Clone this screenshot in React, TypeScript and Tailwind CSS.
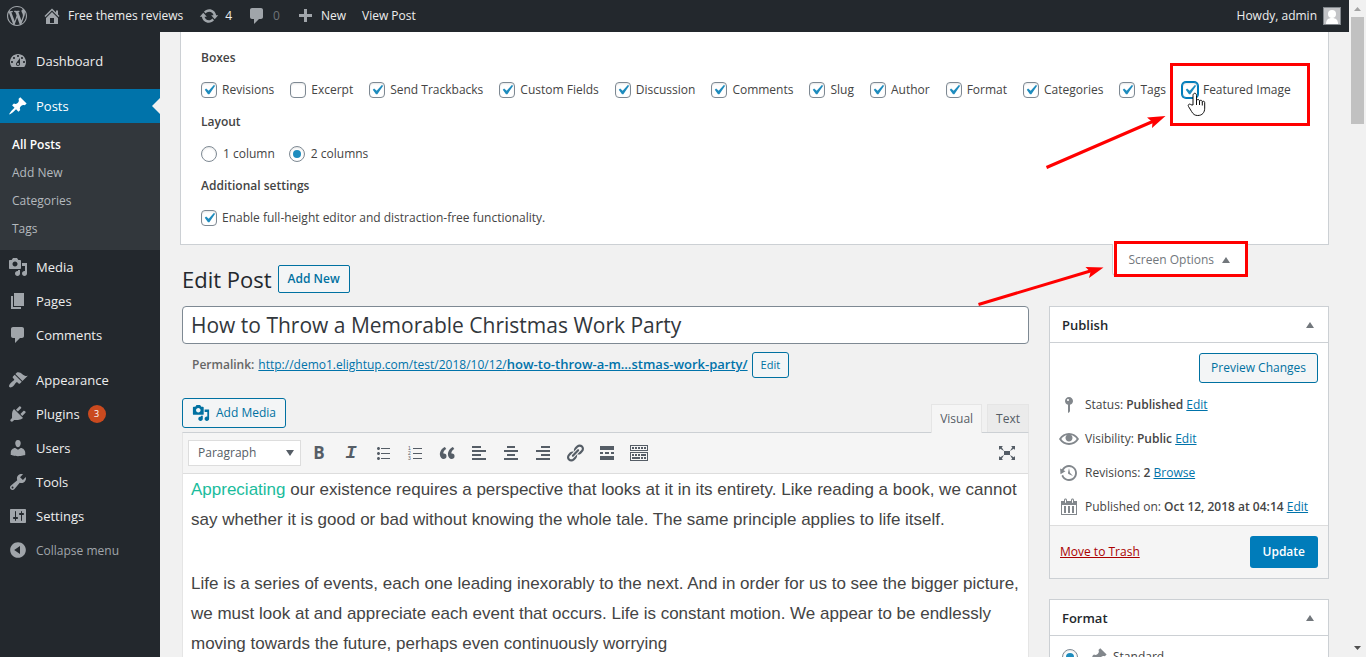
import { useState, type ReactNode } from 'react'
import clsx from 'clsx'

const ICONS = {
  wordpress:
    'M20 10c0-5.51-4.49-10-10-10C4.48 0 0 4.49 0 10c0 5.52 4.48 10 10 10 5.51 0 10-4.48 10-10zM7.78 15.37L4.37 6.22c.55-.02 1.17-.08 1.17-.08.5-.06.44-1.13-.06-1.11 0 0-1.45.11-2.37.11-.18 0-.37 0-.58-.01C4.12 2.69 6.87 1.11 10 1.11c2.33 0 4.45.87 6.05 2.34-.68-.11-1.65.39-1.65 1.58 0 .74.45 1.36.9 2.1.35.61.55 1.36.55 2.46 0 1.49-1.4 5-1.4 5l-3.03-8.37c.54-.02.82-.17.82-.17.5-.05.44-1.25-.06-1.22 0 0-1.44.12-2.38.12-.87 0-2.33-.12-2.33-.12-.5-.03-.56 1.2-.06 1.22l.92.08 1.26 3.41zM17.41 10c.24-.64.74-1.87.43-4.25.7 1.29 1.05 2.71 1.05 4.25 0 3.29-1.73 6.24-4.4 7.78.97-2.59 1.94-5.2 2.92-7.78zM6.1 18.09C3.12 16.65 1.11 13.53 1.11 10c0-1.3.23-2.48.72-3.59C3.25 10.3 4.67 14.2 6.1 18.09zm4.03-6.63l2.58 6.98c-.86.29-1.76.45-2.71.45-.79 0-1.57-.11-2.29-.33.81-2.38 1.62-4.74 2.42-7.1z',
  home: 'M16 8.5l1.53 1.53-1.06 1.06L10 4.6l-6.47 6.49-1.06-1.06L10 2.5l4 4v-2h2v4zm-6-2.46l6 5.99V18H4v-5.97zM12 17v-5H8v5h4z',
  dashboard:
    'M3.76 16h12.48c1.1-1.37 1.76-3.11 1.76-5 0-4.42-3.58-8-8-8s-8 3.58-8 8c0 1.89.66 3.63 1.76 5zM10 4c.55 0 1 .45 1 1s-.45 1-1 1-1-.45-1-1 .45-1 1-1zM6 6c.55 0 1 .45 1 1s-.45 1-1 1-1-.45-1-1 .45-1 1-1zm8 0c.55 0 1 .45 1 1s-.45 1-1 1-1-.45-1-1 .45-1 1-1zm-5.37 5.55L12 7v6c0 1.1-.9 2-2 2s-2-.9-2-2c0-.57.24-1.08.63-1.45zM4 10c.55 0 1 .45 1 1s-.45 1-1 1-1-.45-1-1 .45-1 1-1zm12 0c.55 0 1 .45 1 1s-.45 1-1 1-1-.45-1-1 .45-1 1-1zm-5 3c0-.55-.45-1-1-1s-1 .45-1 1 .45 1 1 1 1-.45 1-1z',
  update:
    'M10.2 3.28c3.53 0 6.43 2.61 6.92 6h2.08l-3.5 4-3.5-4h2.32c-.45-1.97-2.21-3.45-4.32-3.45-1.45 0-2.73.71-3.54 1.78L4.95 5.66C6.23 4.2 8.11 3.28 10.2 3.28zm-.4 13.44c-3.52 0-6.43-2.61-6.92-6H.8l3.5-4c1.17 1.33 2.33 2.67 3.5 4H5.48c.45 1.97 2.21 3.45 4.32 3.45 1.45 0 2.73-.71 3.54-1.78l1.71 1.95c-1.28 1.46-3.15 2.38-5.25 2.38z',
  comments: 'M5 2h9c1.1 0 2 .9 2 2v7c0 1.1-.9 2-2 2h-2l-5 5v-5H5c-1.1 0-2-.9-2-2V4c0-1.1.9-2 2-2z',
  plus: 'M17 8v3h-5v5H9v-5H4V8h5V3h3v5h5z',
  post: 'M10.44 3.02l1.82-1.82 6.36 6.35-1.83 1.82c-1.05-.68-2.48-.57-3.41.36l-.75.75c-.92.93-1.04 2.35-.35 3.41l-1.83 1.82-2.41-2.41-2.8 2.79c-.42.42-3.38 2.71-3.8 2.29s1.86-3.39 2.28-3.81l2.79-2.79L4.1 9.36l1.83-1.82c1.05.69 2.48.57 3.4-.36l.75-.75c.93-.92 1.05-2.35.36-3.41z',
  media:
    'M13 11V4c0-.55-.45-1-1-1h-1.67L9 1H5L3.67 3H2c-.55 0-1 .45-1 1v7c0 .55.45 1 1 1h10c.55 0 1-.45 1-1zM7 4.5c1.38 0 2.5 1.12 2.5 2.5S8.38 9.5 7 9.5 4.5 8.38 4.5 7 5.62 4.5 7 4.5zM14 6h5v10.5c0 1.38-1.12 2.5-2.5 2.5S14 17.88 14 16.5s1.12-2.5 2.5-2.5c.17 0 .34.02.5.05V9h-3V6zm-4 8.05V13h2v3.5c0 1.38-1.12 2.5-2.5 2.5S7 17.88 7 16.5 8.12 14 9.5 14c.17 0 .34.02.5.05z',
  page: 'M6 15V2h10v13H6zm-1 1h8v2H3V5h2v11z',
  appearance:
    'M14.48 11.06L7.41 3.99l1.5-1.5c.5-.56 2.3-.47 3.51.32 1.21.8 1.43 1.28 2.91 2.1 1.18.64 2.45 1.26 4.45.85zm-.71.71L6.7 4.7 4.93 6.47c-.39.39-.39 1.02 0 1.41l1.06 1.06c.39.39.39 1.03 0 1.42-.6.6-1.43 1.11-2.21 1.69-.35.26-.7.53-1.01.84C1.43 14.23.4 16.08 1.4 17.07c.99 1 2.84-.03 4.18-1.36.31-.31.58-.66.85-1.02.57-.78 1.08-1.61 1.69-2.21.39-.39 1.02-.39 1.41 0l1.06 1.06c.39.39 1.02.39 1.41 0z',
  plugins:
    'M13.11 4.36L9.87 7.6 8 5.73l3.24-3.24c.35-.34 1.05-.2 1.56.32.52.51.66 1.21.31 1.55zm-8 1.77l.91-1.12 9.01 9.01-1.19.84c-.71.71-2.63 1.16-3.82 1.16H6.14L4.9 17.26c-.59.59-1.54.59-2.12 0-.59-.58-.59-1.53 0-2.12l1.24-1.24v-3.88c0-1.13.4-3.19 1.09-3.89zm7.26 3.97l3.24-3.24c.34-.35 1.04-.21 1.55.31.52.51.66 1.21.31 1.55l-3.24 3.25z',
  users:
    'M10 9.25c-2.27 0-2.73-3.44-2.73-3.44C7 4.02 7.82 2 9.97 2c2.16 0 2.98 2.02 2.71 3.81 0 0-.41 3.44-2.68 3.44zm0 2.57L12.72 10c2.39 0 4.52 2.33 4.52 4.53v2.49s-3.65 1.13-7.24 1.13c-3.65 0-7.24-1.13-7.24-1.13v-2.49c0-2.25 1.94-4.48 4.47-4.48z',
  tools:
    'M16.68 9.77c-1.34 1.34-3.3 1.67-4.95.99l-5.41 6.52c-.99.99-2.59.99-3.58 0s-.99-2.59 0-3.57l6.52-5.42c-.68-1.65-.35-3.61.99-4.95 1.28-1.28 3.12-1.62 4.72-1.06l-2.89 2.89 2.82 2.82 2.86-2.87c.53 1.58.18 3.39-1.08 4.65zM3.81 16.21c.4.39 1.04.39 1.43 0 .4-.4.4-1.04 0-1.43-.39-.4-1.03-.4-1.43 0-.39.39-.39 1.03 0 1.43z',
  settings:
    'M18 16V4c0-.55-.45-1-1-1H3c-.55 0-1 .45-1 1v12c0 .55.45 1 1 1h14c.55 0 1-.45 1-1zM8 11h1c.55 0 1 .45 1 1s-.45 1-1 1H8v1.5c0 .28-.22.5-.5.5s-.5-.22-.5-.5V13H6c-.55 0-1-.45-1-1s.45-1 1-1h1V5.5c0-.28.22-.5.5-.5s.5.22.5.5V11zm5-2h-1c-.55 0-1-.45-1-1s.45-1 1-1h1V5.5c0-.28.22-.5.5-.5s.5.22.5.5V7h1c.55 0 1 .45 1 1s-.45 1-1 1h-1v5.5c0 .28-.22.5-.5.5s-.5-.22-.5-.5V9z',
  collapse:
    'M10 2.16c4.33 0 7.84 3.51 7.84 7.84s-3.51 7.84-7.84 7.84S2.16 14.33 2.16 10 5.71 2.16 10 2.16zm2 11.72V6.12L6.18 9.97z',
  visibility:
    'M19.7 9.4C17.7 6 14 3.9 10 3.9S2.3 6 .3 9.4L0 10l.3.6c2 3.4 5.7 5.5 9.7 5.5s7.7-2.1 9.7-5.5l.3-.6-.3-.6zM10 14.1c-3.1 0-6-1.6-7.7-4.1C3.6 8 5.7 6.6 8 6.1c-.9.6-1.5 1.7-1.5 2.9 0 1.9 1.6 3.5 3.5 3.5s3.5-1.6 3.5-3.5c0-1.2-.6-2.3-1.5-2.9 2.3.5 4.4 1.9 5.7 3.9-1.7 2.5-4.6 4.1-7.7 4.1z',
  backup:
    'M13.65 2.88c3.93 2.01 5.48 6.84 3.47 10.77s-6.83 5.48-10.77 3.47c-1.87-.96-3.2-2.56-3.86-4.4l1.64-1.03c.45 1.57 1.52 2.95 3.08 3.76 3.01 1.54 6.69.35 8.23-2.66 1.55-3.01.36-6.69-2.65-8.24C9.78 3.01 6.1 4.2 4.56 7.21l1.88.97-4.95 3.08-.39-5.82 1.78.91C4.9 2.4 9.75.89 13.65 2.88zm-4.36 7.83C9.11 10.53 9 10.28 9 10c0-.07.03-.12.04-.19h-.01L10 5l.97 4.81L14 13l-4.5-2.12.02-.02c-.08-.04-.16-.09-.23-.15z',
  calendar:
    'M15 4h3v14H2V4h3V3c0-.83.67-1.5 1.5-1.5S8 2.17 8 3v1h4V3c0-.83.67-1.5 1.5-1.5S15 2.17 15 3v1zM6 3v2.5c0 .28.22.5.5.5s.5-.22.5-.5V3c0-.28-.22-.5-.5-.5S6 2.72 6 3zm7 0v2.5c0 .28.22.5.5.5s.5-.22.5-.5V3c0-.28-.22-.5-.5-.5s-.5.22-.5.5zm4 14V8H3v9h14zM7 16V9H5v7h2zm4 0V9H9v7h2zm4 0V9h-2v7h2z',
  status:
    'M14 6c0 1.86-1.28 3.41-3 3.86V16c0 1-2 2-2 2V9.86c-1.72-.45-3-2-3-3.86 0-2.21 1.79-4 4-4s4 1.79 4 4zM8 5c0 .55.45 1 1 1s1-.45 1-1-.45-1-1-1-1 .45-1 1z',
  ul: 'M5.5 7C4.67 7 4 6.33 4 5.5 4 4.68 4.67 4 5.5 4 6.32 4 7 4.68 7 5.5 7 6.33 6.32 7 5.5 7zM8 5h9v1H8V5zm-2.5 7c-.83 0-1.5-.67-1.5-1.5C4 9.68 4.67 9 5.5 9c.82 0 1.5.68 1.5 1.5 0 .83-.68 1.5-1.5 1.5zM8 10h9v1H8v-1zm-2.5 7c-.83 0-1.5-.67-1.5-1.5 0-.82.67-1.5 1.5-1.5.82 0 1.5.68 1.5 1.5 0 .83-.68 1.5-1.5 1.5zM8 15h9v1H8v-1z',
  olLines: 'M8 5h9v1H8V5zm0 5h9v1H8v-1zm0 5h9v1H8v-1z',
  quote:
    'M9.49 13.22c0-.74-.2-1.38-.61-1.9-.62-.78-1.83-.88-2.53-.72-.29-1.65 1.11-3.75 2.92-4.65L7.88 4c-2.73 1.3-5.42 4.28-4.96 8.05C3.21 14.43 4.59 16 6.54 16c.85 0 1.56-.25 2.12-.75s.83-1.18.83-2.03zm8.05 0c0-.74-.2-1.38-.61-1.9-.63-.78-1.83-.88-2.53-.72-.29-1.65 1.11-3.75 2.92-4.65L15.93 4c-2.73 1.3-5.41 4.28-4.95 8.05.29 2.38 1.66 3.95 3.61 3.95.85 0 1.56-.25 2.12-.75s.83-1.18.83-2.03z',
  alignLeft: 'M12 5V3H3v2h9zm5 4V7H3v2h14zm-5 4v-2H3v2h9zm5 4v-2H3v2h14z',
  alignCenter: 'M14 5V3H6v2h8zm3 4V7H3v2h14zm-3 4v-2H6v2h8zm3 4v-2H3v2h14z',
  alignRight: 'M17 5V3H8v2h9zm0 4V7H3v2h14zm0 4v-2H8v2h9zm0 4v-2H3v2h14z',
  link: 'M17.74 2.76c1.68 1.69 1.68 4.41 0 6.1l-1.53 1.52c-1.12 1.12-2.7 1.47-4.14 1.09l2.62-2.61.76-.77.76-.76c.84-.84.84-2.2 0-3.04-.84-.85-2.2-.85-3.04 0l-.77.76-3.38 3.38c-.37-1.44-.02-3.02 1.1-4.14l1.52-1.53c1.69-1.68 4.42-1.68 6.1 0zM8.59 13.43l5.34-5.34c.42-.42.42-1.1 0-1.52-.44-.43-1.13-.39-1.53 0l-5.33 5.34c-.42.42-.42 1.1 0 1.52.44.43 1.13.39 1.52 0zm-.76 2.29l4.14-4.15c.38 1.44.03 3.02-1.09 4.14l-1.52 1.53c-1.69 1.68-4.41 1.68-6.1 0-1.68-1.68-1.68-4.42 0-6.1l1.53-1.52c1.12-1.12 2.7-1.47 4.14-1.1l-4.14 4.15c-.85.84-.85 2.2 0 3.05.84.84 2.2.84 3.04 0z',
  more: 'M17 7V3H3v4h14zM6 11V9H3v2h3zm6 0V9H8v2h4zm5 0V9h-3v2h3zm0 6v-4H3v4h14z',
  kitchenSink:
    'M19 2v6H1V2h18zm-1 5V3H2v4h16zM5 4v2H3V4h2zm3 0v2H6V4h2zm3 0v2H9V4h2zm3 0v2h-2V4h2zm3 0v2h-2V4h2zm2 5v9H1V9h18zm-1 8v-7H2v7h16zM5 11v2H3v-2h2zm3 0v2H6v-2h2zm3 0v2H9v-2h2zm6 0v2h-5v-2h5zm-6 3v2H3v-2h8zm3 0v2h-2v-2h2zm3 0v2h-2v-2h2z',
  expand:
    'M7 8h6v4H7zm-5 5v4h4l-1.2-1.2L7 12l-3.8 2.2M14 17h4v-4l-1.2 1.2L13 12l2.2 3.8M14 3l1.3 1.3L13 8l3.8-2.2L18 7V3M6 3H2v4l1.2-1.2L7 8 4.7 4.3',
  check: 'M14.83 4.89l1.34.94-5.81 8.38H9.02L5.78 9.67l1.34-1.25 2.57 2.4z',
}

type IconName = keyof typeof ICONS

function Icon({ name, className = 'size-5' }: { name: IconName; className?: string }) {
  return (
    <svg className={clsx('shrink-0', className)} viewBox="0 0 20 20" fill="currentColor" aria-hidden="true">
      <path d={ICONS[name]} />
    </svg>
  )
}

function Triangle({ down = false, className = 'h-[6px] w-2' }: { down?: boolean; className?: string }) {
  return (
    <svg
      className={clsx('shrink-0', className)}
      viewBox="0 0 8 6"
      preserveAspectRatio="none"
      fill="currentColor"
      aria-hidden="true"
    >
      <path d={down ? 'M0 0h8L4 6z' : 'M0 6h8L4 0z'} />
    </svg>
  )
}

function Checkbox({ label, checked = false, focused = false }: { label: string; checked?: boolean; focused?: boolean }) {
  const [on, setOn] = useState(checked)
  return (
    <label className="flex items-center gap-[5px] whitespace-nowrap">
      <span className="grid grid-cols-[16px] grid-rows-[16px] place-items-center">
        <input
          type="checkbox"
          checked={on}
          onChange={() => setOn(!on)}
          className={clsx(
            'col-start-1 row-start-1 size-4 appearance-none rounded border bg-white shadow-[inset_0_1px_2px_rgba(0,0,0,0.1)]',
            focused ? 'border-[#007cba] ring-1 ring-[#007cba]' : 'border-[#7e8993]',
          )}
        />
        {on && <Icon name="check" className="pointer-events-none col-start-1 row-start-1 size-5 text-[#1e8cbe]" />}
      </span>
      {label}
    </label>
  )
}

function Radio({ label, name, checked = false }: { label: ReactNode; name: string; checked?: boolean }) {
  return (
    <label className="flex items-center gap-[6px] whitespace-nowrap">
      <span className="grid grid-cols-[16px] grid-rows-[16px] place-items-center">
        <input
          type="radio"
          name={name}
          defaultChecked={checked}
          className="peer col-start-1 row-start-1 size-4 appearance-none rounded-full border border-[#7e8993] bg-white shadow-[inset_0_1px_2px_rgba(0,0,0,0.1)]"
        />
        <span className="pointer-events-none col-start-1 row-start-1 hidden size-2 rounded-full bg-[#1e8cbe] peer-checked:block" />
      </span>
      {label}
    </label>
  )
}

function AdminBar() {
  return (
    <header className="flex h-8 shrink-0 items-center bg-[#23282d] pr-2 pl-[7px] text-[12px] text-[#eee]">
      <a href="#about" aria-label="About WordPress" className="mr-[15px] text-[#a0a5aa]">
        <Icon name="wordpress" />
      </a>
      <a href="#site" className="mr-4 flex items-center gap-[6px]">
        <Icon name="home" className="size-5 text-[#a0a5aa]" />
        Free themes reviews
      </a>
      <a href="#updates" className="mr-[15px] flex items-center gap-[6px]">
        <Icon name="update" className="size-5 text-[#a0a5aa]" />4
      </a>
      <a href="#comments" className="mr-[15px] flex items-center gap-[6px] text-[#a0a5aa]">
        <Icon name="comments" />
        <span className="opacity-60">0</span>
      </a>
      <a href="#new" className="mr-4 flex items-center gap-[6px]">
        <Icon name="plus" className="size-5 text-[#a0a5aa]" />
        New
      </a>
      <a href="#view">View Post</a>
      <a href="#profile" className="ml-auto flex items-center gap-[6px]">
        Howdy, admin
        <svg className="size-[18px] border border-[#82878c] bg-[#c3c4c7]" viewBox="0 0 16 16" fill="#fff" aria-hidden="true">
          <circle cx="8" cy="6" r="4" />
          <path d="M2 16c0-4 2-6 6-6s6 2 6 6z" />
        </svg>
      </a>
    </header>
  )
}

function MenuItem({ icon, label, count, active = false }: { icon: IconName; label: string; count?: number; active?: boolean }) {
  return (
    <a
      href={`#${label.toLowerCase()}`}
      className={clsx(
        'flex h-[34px] items-center gap-2 pl-2 text-[13px]',
        active ? 'bg-[#0073aa] text-white' : 'text-[#eee]',
      )}
    >
      <Icon name={icon} className={clsx('size-5', !active && 'text-[#a0a5aa]')} />
      <span className="pt-0.5">{label}</span>
      {count !== undefined && (
        <span className="grid size-[18px] place-items-center rounded-full bg-[#ca4a1f] text-[9px] text-white">{count}</span>
      )}
      {active && (
        <svg className="ml-auto h-4 w-2" viewBox="0 0 8 16" fill="#f1f1f1" aria-hidden="true">
          <path d="M8 0v16L0 8z" />
        </svg>
      )}
    </a>
  )
}

function AdminMenu() {
  return (
    <nav className="w-40 shrink-0 bg-[#23282d] pt-3">
      <MenuItem icon="dashboard" label="Dashboard" />
      <div className="h-[11px]" />
      <MenuItem icon="post" label="Posts" active />
      <ul className="bg-[#32373c] pt-2 pb-[7px] text-[12px] text-[#b4b9be]">
        {['All Posts', 'Add New', 'Categories', 'Tags'].map((item, i) => (
          <li key={item}>
            <a href="#posts" className={clsx('flex h-7 items-center px-3', i === 0 && 'font-semibold text-white')}>
              {item}
            </a>
          </li>
        ))}
      </ul>
      <MenuItem icon="media" label="Media" />
      <MenuItem icon="page" label="Pages" />
      <MenuItem icon="comments" label="Comments" />
      <div className="h-[11px]" />
      <MenuItem icon="appearance" label="Appearance" />
      <MenuItem icon="plugins" label="Plugins" count={3} />
      <MenuItem icon="users" label="Users" />
      <MenuItem icon="tools" label="Tools" />
      <MenuItem icon="settings" label="Settings" />
      <button type="button" className="flex h-[34px] w-full items-center gap-2 pl-2 text-[12px] text-[#a0a5aa]">
        <Icon name="collapse" />
        <span className="pt-0.5">Collapse menu</span>
      </button>
    </nav>
  )
}

const BOXES = [
  { label: 'Revisions', checked: true },
  { label: 'Excerpt', checked: false },
  { label: 'Send Trackbacks', checked: true },
  { label: 'Custom Fields', checked: true },
  { label: 'Discussion', checked: true },
  { label: 'Comments', checked: true },
  { label: 'Slug', checked: true },
  { label: 'Author', checked: true },
  { label: 'Format', checked: true },
  { label: 'Categories', checked: true },
  { label: 'Tags', checked: true },
  { label: 'Featured Image', checked: true, focused: true },
]

function ScreenOptions() {
  return (
    <form className="mr-5 ml-5 border border-t-0 border-[#ccd0d4] bg-white px-5 py-[10px] leading-8">
      <fieldset>
        <legend className="font-semibold">Boxes</legend>
        <div className="flex gap-4">
          {BOXES.map((box) => (
            <Checkbox key={box.label} {...box} />
          ))}
        </div>
      </fieldset>
      <fieldset>
        <legend className="font-semibold">Layout</legend>
        <div className="flex gap-[14px]">
          <Radio name="columns" label="1 column" />
          <Radio name="columns" label="2 columns" checked />
        </div>
      </fieldset>
      <fieldset>
        <legend className="font-semibold">Additional settings</legend>
        <Checkbox label="Enable full-height editor and distraction-free functionality." checked />
      </fieldset>
    </form>
  )
}

function ToolButton({ label, children }: { label: string; children: ReactNode }) {
  return (
    <button type="button" aria-label={label} className="grid h-6 w-8 shrink-0 place-items-center">
      {children}
    </button>
  )
}

function Toolbar() {
  return (
    <div className="flex h-[41px] items-center border-b border-[#ddd] bg-[#f5f5f5] px-[5px] text-[#555d66]">
      <div className="mr-[2px] grid items-center border border-[#ddd] bg-white">
        <select aria-label="Block format" className="col-start-1 row-start-1 h-6 w-[111px] appearance-none pl-[9px] text-[12px]">
          <option>Paragraph</option>
          <option>Heading 1</option>
        </select>
        <Triangle down className="pointer-events-none col-start-1 row-start-1 mr-[6px] h-[6px] w-2 justify-self-end" />
      </div>
      <ToolButton label="Bold">
        <span className="text-[17px] leading-5 font-bold">B</span>
      </ToolButton>
      <ToolButton label="Italic">
        <span className="font-['Liberation_Mono',monospace] text-[19px] leading-5 font-bold italic">I</span>
      </ToolButton>
      <ToolButton label="Bulleted list">
        <Icon name="ul" />
      </ToolButton>
      <ToolButton label="Numbered list">
        <svg
          className="size-5 font-['Liberation_Sans',Arial,sans-serif] text-[5px]"
          viewBox="0 0 20 20"
          fill="currentColor"
          aria-hidden="true"
        >
          <path d={ICONS.olLines} />
          <text x="3" y="7">1</text>
          <text x="3" y="12">2</text>
          <text x="3" y="17">3</text>
        </svg>
      </ToolButton>
      <ToolButton label="Blockquote">
        <Icon name="quote" />
      </ToolButton>
      <ToolButton label="Align left">
        <Icon name="alignLeft" />
      </ToolButton>
      <ToolButton label="Align center">
        <Icon name="alignCenter" />
      </ToolButton>
      <ToolButton label="Align right">
        <Icon name="alignRight" />
      </ToolButton>
      <ToolButton label="Insert link">
        <Icon name="link" />
      </ToolButton>
      <ToolButton label="Insert Read More tag">
        <Icon name="more" />
      </ToolButton>
      <ToolButton label="Toolbar toggle">
        <Icon name="kitchenSink" />
      </ToolButton>
      <div className="ml-auto flex">
        <ToolButton label="Distraction-free mode">
          <Icon name="expand" />
        </ToolButton>
      </div>
    </div>
  )
}

function Editor() {
  return (
    <section>
      <div className="flex items-end justify-between">
        <button
          type="button"
          className="mb-1 flex h-[30px] items-center gap-[6px] rounded-[3px] border border-[#0071a1] bg-[#f3f5f6] px-[9px] text-[12px] text-[#0071a1]"
        >
          <Icon name="media" className="size-[18px]" />
          Add Media
        </button>
        <div className="flex gap-[5px] text-[#555d66]">
          <button type="button" className="z-10 -mb-px h-[29px] border border-b-0 border-[#e5e5e5] bg-[#f5f5f5] px-2 text-[12px]">
            Visual
          </button>
          <button type="button" className="h-7 border border-b-0 border-[#e5e5e5] bg-[#ebebeb] px-2 text-[12px]">
            Text
          </button>
        </div>
      </div>
      <div className="border border-[#e5e5e5] border-t-[#ccd0d4] bg-white">
        <Toolbar />
        <article className="px-2 pt-px pb-8 font-['Liberation_Sans',Arial,sans-serif] text-[17px] leading-[30px] text-[#444]">
          <p>
            <span className="text-[#1abc9c]">Appreciating</span> our existence requires a perspective that looks at it in
            its entirety. Like reading a book, we cannot say whether it is good or bad without knowing the whole tale. The
            same principle applies to life itself.
          </p>
          <p className="mt-[34px]">
            Life is a series of events, each one leading inexorably to the next. And in order for us to see the bigger
            picture, we must look at and appreciate each event that occurs. Life is constant motion. We appear to be
            endlessly moving towards the future, perhaps even continuously worrying
          </p>
        </article>
      </div>
    </section>
  )
}

function PostBox({ title, children }: { title: string; children: ReactNode }) {
  return (
    <section className="mb-5 border border-[#ccd0d4] bg-white">
      <div className="flex h-9 items-center justify-between border-b border-[#ccd0d4] pr-[14px] pl-3">
        <h2 className="pt-0.5 text-[13px] font-semibold text-[#23282d]">{title}</h2>
        <button type="button" aria-label={`Toggle panel: ${title}`} className="text-[#72777c]">
          <Triangle />
        </button>
      </div>
      {children}
    </section>
  )
}

function PublishRow({ icon, label, value, action }: { icon: IconName; label: string; value: string; action: string }) {
  return (
    <div className="flex h-[34px] items-center whitespace-nowrap">
      <Icon name={icon} className="mr-[6px] size-5 text-[#82878c]" />
      <span>
        {label} <b className="font-semibold">{value}</b>{' '}
        <a href="#edit" className="text-[#0073aa] underline">
          {action}
        </a>
      </span>
    </div>
  )
}

function Sidebar() {
  return (
    <aside className="w-[280px] shrink-0">
      <PostBox title="Publish">
        <div className="pt-[10px] pr-[10px] pb-px pl-[9px]">
          <div className="mb-[5px] flex justify-end">
            <button
              type="button"
              className="h-[30px] rounded-[3px] border border-[#0071a1] bg-[#f3f5f6] px-[11px] text-[12px] text-[#0071a1]"
            >
              Preview Changes
            </button>
          </div>
          <PublishRow icon="status" label="Status:" value="Published" action="Edit" />
          <PublishRow icon="visibility" label="Visibility:" value="Public" action="Edit" />
          <PublishRow icon="backup" label="Revisions:" value="2" action="Browse" />
          <PublishRow icon="calendar" label="Published on:" value="Oct 12, 2018 at 04:14" action="Edit" />
        </div>
        <div className="flex items-center justify-between border-t border-[#ddd] bg-[#f5f5f5] p-[10px]">
          <a href="#trash" className="text-[#a00] underline">
            Move to Trash
          </a>
          <button type="button" className="h-8 rounded-[3px] bg-[#007cba] px-[13px] text-[12px] font-semibold text-white">
            Update
          </button>
        </div>
      </PostBox>
      <PostBox title="Format">
        <div className="px-3 py-[11px]">
          <Radio
            name="format"
            checked
            label={
              <span className="ml-1 flex items-center gap-[5px]">
                <Icon name="post" className="size-5 text-[#82878c]" />
                Standard
              </span>
            }
          />
        </div>
      </PostBox>
    </aside>
  )
}

function Scrollbar() {
  return (
    <div className="flex w-[17px] shrink-0 flex-col items-center justify-between bg-[#f1f1f1] py-[7px] text-[#505050]">
      <div className="flex flex-col items-center gap-[6px] text-[#a3a3a3]">
        <Triangle className="h-1 w-[7px]" />
        <div className="h-[107px] w-[13px] bg-[#c1c1c1]" />
      </div>
      <Triangle down className="h-1 w-[7px]" />
    </div>
  )
}

/** Red frames, arrows and the pointer drawn over the screen. */
function Annotations() {
  return (
    <svg className="pointer-events-none absolute top-0 left-0 z-20" width="1349" height="320" fill="none" aria-hidden="true">
      <g stroke="#f00" strokeWidth="3">
        <rect x="1171.5" y="64.5" width="137" height="60" />
        <rect x="1115.5" y="242.5" width="131" height="33" />
        <path d="M1046.5 167.5L1155 120.5" />
        <path d="M978.5 304.5L1092 270.5" />
      </g>
      <path fill="#f00" d="M1165.5 116l-18.500 1.500 5.500 4.500-.5 6z" />
      <path fill="#f00" d="M1103.5 267.500l-18-.5 5 5-1.500 6z" />
      <path
        fill="#fff"
        stroke="#111"
        strokeLinejoin="round"
        d="M1193 105V95.500c0-3 3.500-3 3.500 0V101c0-2 3-2 3 0v.8c0-2 2.800-2 2.800 0v.8c0-1.800 2.400-1.800 2.400 0v5.500c0 4.500-2.500 7.400-7 7.400-3 0-4.500-1.300-6-3.800l-3.200-5.200c-1-2 1-3.200 2.600-1.700z"
      />
      <path stroke="#111" d="M1196.5 101v4M1199.5 102v3M1202.300 102.500v3" />
    </svg>
  )
}

export default function App() {
  const [title, setTitle] = useState('How to Throw a Memorable Christmas Work Party')

  return (
    <div className="relative flex h-screen overflow-hidden bg-[#f1f1f1] font-['Open_Sans','Noto_Sans',sans-serif] text-[12px] text-[#444]">
      <div className="flex min-w-0 flex-1 flex-col">
        <AdminBar />
        <div className="flex min-h-0 flex-1">
          <AdminMenu />
          <main className="min-w-0 flex-1">
            <ScreenOptions />
            <div className="flex items-start justify-between pr-[102px] pl-[22px]">
              <div className="flex items-center gap-[6px] pt-5">
                <h1 className="text-[22px] leading-7 text-[#23282d]">Edit Post</h1>
                <a
                  href="#new"
                  className="flex h-7 items-center rounded-[2px] border border-[#0071a1] bg-[#f3f5f6] px-[9px] font-semibold text-[#0071a1]"
                >
                  Add New
                </a>
              </div>
              <button
                type="button"
                className="-mt-px flex h-8 items-center gap-2 rounded-b border border-t-0 border-[#ccd0d4] bg-white px-4 text-[12px] text-[#72777c]"
              >
                Screen Options
                <Triangle />
              </button>
            </div>
            <div className="flex gap-5 pt-[13px] pr-5 pl-[22px]">
              <div className="min-w-0 flex-1">
                <input
                  aria-label="Post title"
                  value={title}
                  onChange={(e) => setTitle(e.target.value)}
                  className="h-[38px] w-full rounded border border-[#7e8993] bg-white px-2 text-[21px] text-[#32373c]"
                />
                <div className="mt-2 mb-5 flex items-center gap-1 pl-[10px] text-[#666]">
                  <b className="font-semibold">Permalink:</b>
                  <a href="#permalink" className="text-[#0073aa] underline">
                    http://demo1.elightup.com/test/2018/10/12/
                    <b className="text-[13px] font-semibold">how-to-throw-a-m…stmas-work-party/</b>
                  </a>
                  <button
                    type="button"
                    className="h-[26px] rounded-[3px] border border-[#0071a1] bg-[#f3f5f6] px-2 text-[11px] text-[#0071a1]"
                  >
                    Edit
                  </button>
                </div>
                <Editor />
              </div>
              <Sidebar />
            </div>
          </main>
        </div>
      </div>
      <Scrollbar />
      <Annotations />
    </div>
  )
}
